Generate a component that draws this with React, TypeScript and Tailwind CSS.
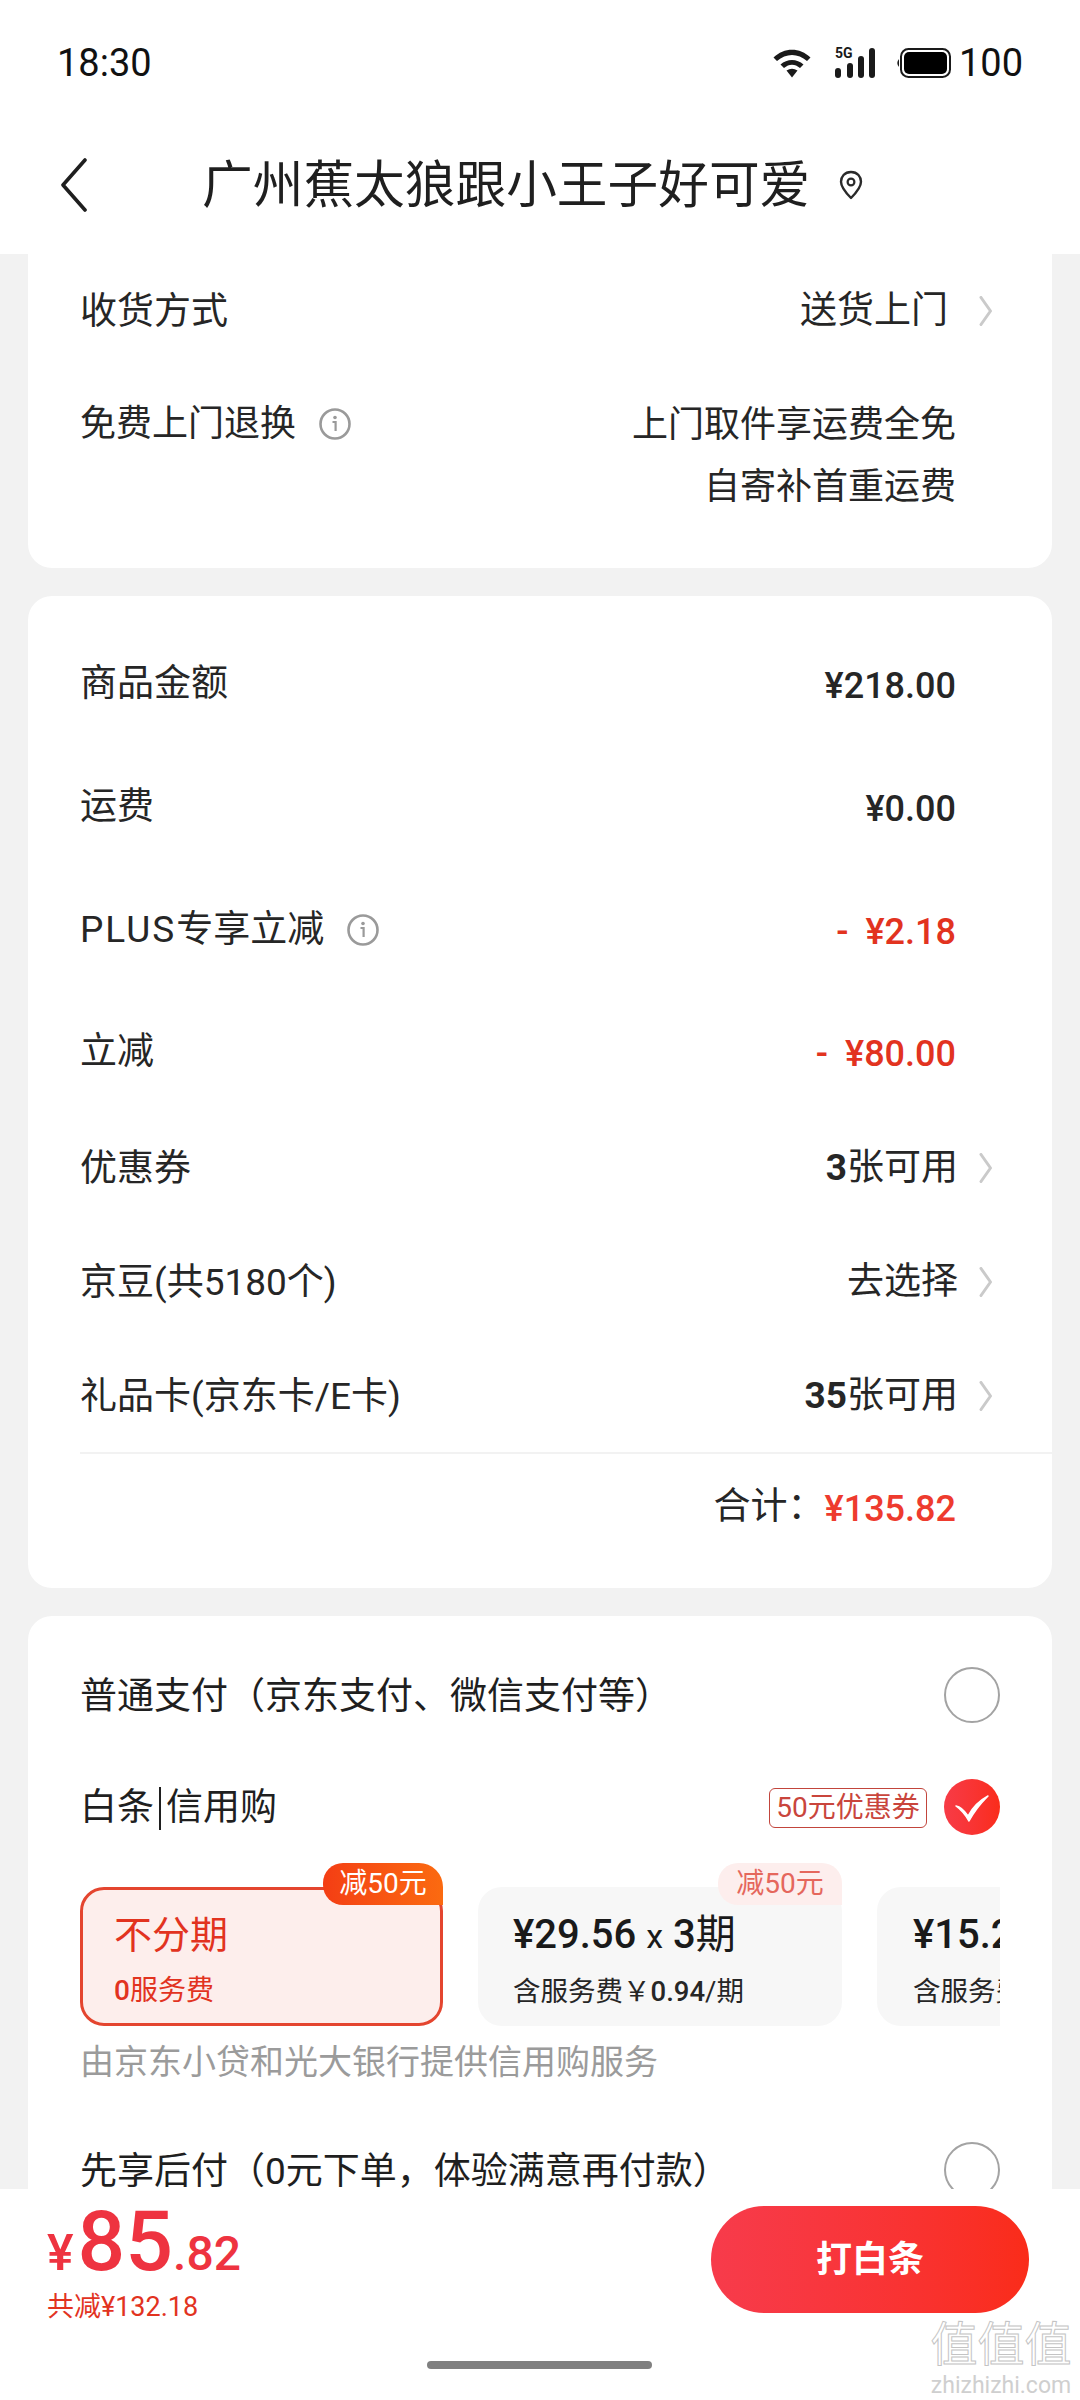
import React from "react";

const Chevron = () => (
  <svg width="14" height="30" viewBox="0 0 14 30" className="shrink-0">
    <path d="M2 1.5 L11.5 15 L2 28.5" fill="none" stroke="#cacaca" strokeWidth="3" strokeLinecap="round" strokeLinejoin="round" />
  </svg>
);

const Info = () => (
  <svg width="34" height="34" viewBox="0 0 34 34" className="shrink-0">
    <circle cx="17" cy="17" r="14.5" fill="none" stroke="#9a9a9a" strokeWidth="2.6" />
    <circle cx="17" cy="10.5" r="1.8" fill="#9a9a9a" />
    <path d="M14.5 15 H17.6 V24" fill="none" stroke="#9a9a9a" strokeWidth="2.2" />
  </svg>
);

const Radio = () => <div className="w-[56px] h-[56px] rounded-full border-[2px] border-[#a3a3a3] bg-white shrink-0" />;

const Row = ({ h, label, value }: { h: string; label: React.ReactNode; value: React.ReactNode }) => (
  <div className={`${h} flex items-center justify-between`}>
    <div className="pt-[2px] flex items-center text-[37px] text-[#262626]">{label}</div>
    {value}
  </div>
);

const Price = ({ children, red }: { children: React.ReactNode; red?: boolean }) => (
  <div className={`pt-[6px] pr-[96px] text-[36px] font-medium ${red ? "text-[#e2331f]" : "text-[#262626]"}`}>{children}</div>
);

const Link = ({ children, wide }: { children: React.ReactNode; wide?: boolean }) => (
  <div className="flex items-center text-[37px] text-[#262626] pr-[59px]">
    <span>{children}</span>
    <span className={wide ? "ml-[31px]" : "ml-[21px]"}><Chevron /></span>
  </div>
);

export default function App() {
  return (
    <div className="w-[1080px] h-[2400px] relative overflow-hidden flex flex-col bg-white font-['Roboto','Noto_Sans_CJK_SC',sans-serif]">
      {/* status + title */}
      <header className="h-[254px] shrink-0 bg-white">
        <div className="h-[126px] pl-[57px] pr-[57px] flex items-center justify-between">
          <span className="text-[38px] leading-none text-[#111]">18:30</span>
          <div className="flex items-center">
            <svg width="40" height="30" viewBox="0 0 40 30">
              <path d="M1.5 9.5 C12 -1 28 -1 38.5 9.5 L35 13 C26 5 14 5 5 13 Z" fill="#1a1a1a" />
              <path d="M8.5 16.5 C15 10.5 25 10.5 31.500 16.5 L28 20 C23 15.500 17 15.500 12 20 Z" fill="#1a1a1a" />
              <path d="M14.500 22.500 Q20 19 25.500 22.500 L20 29.500 Z" fill="#1a1a1a" />
            </svg>
            <div className="relative w-[41px] h-[30px] ml-[23px]">
              <span className="absolute left-0 -top-[2px] text-[14px] leading-[14px] font-bold text-[#1a1a1a]">5G</span>
              <svg width="41" height="30" viewBox="0 0 41 30" className="absolute left-0 top-0">
                <rect x="0" y="20" width="6" height="10" rx="3" fill="#1a1a1a" />
                <rect x="12" y="15" width="6" height="15" rx="3" fill="#1a1a1a" />
                <rect x="23" y="8" width="6" height="22" rx="3" fill="#1a1a1a" />
                <rect x="34" y="0" width="6" height="30" rx="3" fill="#1a1a1a" />
              </svg>
            </div>
            <svg width="56" height="30" viewBox="0 0 56 30" className="ml-[19px]">
              <path d="M4 11 Q0.500 15 4 19 Z" fill="#1a1a1a" />
              <rect x="6" y="1" width="49" height="28" rx="7.500" fill="none" stroke="#1a1a1a" strokeWidth="2" />
              <rect x="9" y="4" width="43" height="22" rx="5" fill="#000" />
            </svg>
            <span className="ml-[8px] text-[38px] leading-none text-[#111]">100</span>
          </div>
        </div>
        <div className="h-[118px] flex items-center pl-[60px]">
          <svg width="28" height="54" viewBox="0 0 28 54" className="shrink-0">
            <path d="M25 2 L3 27 L25 52" fill="none" stroke="#1f1f1f" strokeWidth="3.600" strokeLinecap="round" strokeLinejoin="round" />
          </svg>
          <div className="ml-[114px] pt-[2px] text-[50.7px] leading-none text-[#1f1f1f] whitespace-nowrap">广州蕉太狼跟小王子好可爱</div>
          <svg width="26" height="30" viewBox="0 0 26 30" className="ml-[28px] shrink-0">
            <path d="M13 2 C6.500 2 3 6.800 3 11.800 C3 18 9 24 13 28 C17 24 23 18 23 11.800 C23 6.800 19.500 2 13 2 Z" fill="none" stroke="#2a2a2a" strokeWidth="2.400" strokeLinejoin="round" />
            <circle cx="13" cy="12" r="3.400" fill="none" stroke="#2a2a2a" strokeWidth="2.200" />
          </svg>
        </div>
      </header>

      {/* scrolling content */}
      <main className="flex-1 min-h-0 overflow-hidden bg-[#f2f2f2] px-[28px]">
        <section className="bg-white rounded-b-[24px] pl-[52px] h-[314px]">
          <Row h="h-[114px]" label="收货方式" value={<Link wide>送货上门</Link>} />
          <div className="mt-[24px] flex justify-between">
            <div className="h-[62px] pt-[2px] flex items-center text-[36px] text-[#262626]">
              免费上门退换<span className="ml-[22px]"><Info /></span>
            </div>
            <div className="pt-[2px] text-right text-[36px] leading-[62px] text-[#262626] pr-[96px]">
              <div>上门取件享运费全免</div>
              <div>自寄补首重运费</div>
            </div>
          </div>
        </section>

        <section className="mt-[28px] bg-white rounded-[24px] pl-[52px] pt-[25px] h-[992px]">
          <Row h="h-[123px]" label="商品金额" value={<Price>¥218.00</Price>} />
          <Row h="h-[123px]" label="运费" value={<Price>¥0.00</Price>} />
          <Row h="h-[123px]" label={<><span className="tracking-[2px]">PLUS</span>专享立减<span className="ml-[22px]"><Info /></span></>} value={<Price red><span className="mr-[8px]">-</span> ¥2.18</Price>} />
          <Row h="h-[121px]" label="立减" value={<Price red><span className="mr-[8px]">-</span> ¥80.00</Price>} />
          <Row h="h-[114px]" label="优惠券" value={<Link><span className="font-bold">3</span>张可用</Link>} />
          <Row h="h-[114px]" label="京豆(共5180个)" value={<Link>去选择</Link>} />
          <Row h="h-[113px]" label="礼品卡(京东卡/E卡)" value={<Link><span className="font-bold">35</span>张可用</Link>} />
          <div className="h-[2px] bg-[#f2f2f2]" />
          <div className="h-[104px] flex items-center justify-end pr-[96px]">
            <span className="pt-[2px] text-[37px] text-[#262626]">合计：</span>
            <span className="pt-[6px] text-[36px] font-medium text-[#ee3b2e]">¥135.82</span>
          </div>
        </section>

        <section className="mt-[28px] bg-white rounded-t-[24px] pl-[52px] pr-[52px] pt-[24px]">
          <div className="h-[110px] flex items-center justify-between text-[37px] text-[#1f1f1f]">
            <span className="pt-[3px]">普通支付（京东支付、微信支付等）</span>
            <Radio />
          </div>
          <div className="mt-[2px] h-[110px] flex items-center justify-between">
            <div className="pt-[2px] flex items-center text-[37px] text-[#1f1f1f]">
              白条<span className="mx-[5px] w-[2px] h-[43px] bg-[#1f1f1f]" />信用购
            </div>
            <div className="flex items-center">
              <div className="mt-[2px] h-[40px] w-[158px] rounded-[6px] border border-[#c2453c] flex items-center justify-center text-[28px] leading-none text-[#c9453c]">50元优惠券</div>
              <div className="ml-[17px] w-[56px] h-[56px] rounded-full bg-linear-to-r from-[#f73b46] to-[#fa2c19] flex items-center justify-center">
                <svg width="36" height="30" viewBox="0 0 36 30">
                  <path d="M2 14 Q8 15 14 24 Q21 11 34 4 Q22 16 15 29 Q9 19 2 14 Z" fill="#fff" stroke="#fff" strokeWidth="1.500" strokeLinejoin="round" />
                </svg>
              </div>
            </div>
          </div>

          <div className="overflow-hidden pt-[25px] flex gap-[35px]">
            <div className="relative w-[363px] h-[139px] shrink-0 rounded-[24px] border-[3px] border-[#e4452f] bg-[#fdeeec] pl-[31px] pt-[20px]">
              <div className="text-[38px] leading-[50px] text-[#e2331f]">不分期</div>
              <div className="mt-[12px] text-[28px] leading-[38px] text-[#e2331f]"><span className="font-medium">0</span>服务费</div>
              <div className="absolute -right-[3px] -top-[27px] w-[120px] h-[42px] rounded-tl-[20px] rounded-tr-[24px] rounded-bl-[20px] bg-linear-to-r from-[#f43d14] to-[#fb6a10] flex items-center justify-center text-[28px] leading-none text-white">减50元</div>
            </div>
            <div className="relative w-[364px] h-[139px] shrink-0 rounded-[24px] bg-[#f7f7f7] pl-[35px] pt-[23px]">
              <div className="text-[40px] leading-[50px] font-medium text-[#1a1a1a] whitespace-nowrap">¥29.56 <span className="font-normal text-[34px]">x</span> 3<span className="font-normal">期</span></div>
              <div className="mt-[12px] text-[27.5px] leading-[38px] text-[#262626] whitespace-nowrap">含服务费￥<span className="font-medium">0.94</span>/期</div>
              <div className="absolute right-0 -top-[24px] w-[124px] h-[42px] rounded-t-[20px] rounded-bl-[20px] bg-[#fdeeed] flex items-center justify-center text-[28px] leading-none text-[#e5675c]">减50元</div>
            </div>
            <div className="w-[364px] h-[139px] shrink-0 rounded-[24px] bg-[#f7f7f7] pl-[36px] pt-[23px]">
              <div className="text-[40px] leading-[50px] font-medium text-[#1a1a1a] whitespace-nowrap">¥15.23 <span className="font-normal text-[34px]">x</span> 6<span className="font-normal">期</span></div>
              <div className="mt-[12px] text-[27.5px] leading-[38px] text-[#262626] whitespace-nowrap">含服务费￥0.48/期</div>
            </div>
          </div>

          <div className="mt-[12px] text-[34px] leading-[48px] text-[#9b9b9b] whitespace-nowrap">由京东小贷和光大银行提供信用购服务</div>
          <div className="mt-[29px] h-[110px] flex items-center justify-between text-[37px] text-[#1f1f1f]">
            <span className="pt-[3px]">先享后付（0元下单，体验满意再付款）</span>
            <Radio />
          </div>
        </section>
      </main>

      {/* bottom bar */}
      <footer className="h-[211px] shrink-0 bg-white pl-[47px] pr-[51px] pt-[17px]">
        <div className="flex justify-between">
          <div className="text-[#ee3340]">
            <div className="-mt-[6px] flex items-baseline h-[80px] font-medium leading-none">
              <span className="text-[50px]">¥</span>
              <span className="ml-[4px] text-[84px]">85</span>
              <span className="text-[48px]">.82</span>
            </div>
            <div className="mt-[9px] text-[27px] leading-[36px] text-[#e2331f]">共减¥132.18</div>
          </div>
          <button className="w-[318px] h-[107px] rounded-full bg-linear-to-r from-[#f73b4b] to-[#fa2c19] text-white text-[36px] font-bold">打白条</button>
        </div>
      </footer>

      <div className="absolute left-[427px] top-[2361px] w-[225px] h-[8px] rounded-full bg-[#808080]" />

      {/* watermark */}
      <div className="absolute left-[930px] top-[2316px] w-[142px] text-center select-none">
        <div className="text-[47px] leading-[58px] whitespace-nowrap text-white [-webkit-text-stroke:1px_#c4c4c4]">值值值</div>
        <div className="text-[23px] leading-[24px] whitespace-nowrap text-[#cfcfcf]">zhizhizhi.com</div>
      </div>
    </div>
  );
}
